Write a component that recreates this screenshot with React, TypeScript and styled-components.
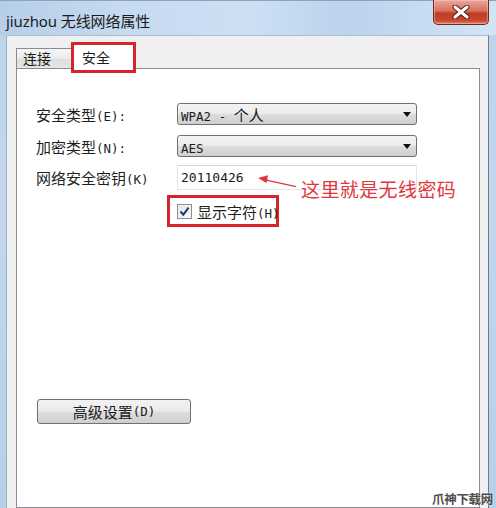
import React from "react";
import styled, { createGlobalStyle } from "styled-components";

const GlobalStyle = createGlobalStyle`
  html, body { margin: 0; padding: 0; background: #fff; }
  body { width: 496px; height: 508px; overflow: hidden; }
  * { box-sizing: border-box; }
`;

const CJK = `"Noto Sans CJK SC", "Noto Sans", sans-serif`;
const MONO = `"DejaVu Sans Mono", "Noto Sans CJK SC", monospace`;

const Window = styled.div`
  position: relative;
  width: 496px;
  height: 508px;
  overflow: hidden;
  display: flex;
  flex-direction: column;
  background: linear-gradient(to bottom, #bcd3ec 0%, #c2d7ee 40%, #b7cfe9 100%);
  font-family: ${CJK};
  color: #1c1c1c;
`;

const TitleBar = styled.div`
  height: 35px;
  flex: none;
  display: flex;
  align-items: flex-start;
  padding-left: 6px;
  background: linear-gradient(
    to right,
    #b6cee9 0%,
    #c6daf0 25%,
    #cddff3 50%,
    #bcd3ed 70%,
    #d3e4f5 100%
  );
  border-top: 1px solid #8da3bd;
`;

const Title = styled.div`
  margin-top: 10px;
  font-family: "Noto Sans", "Noto Sans CJK SC", sans-serif;
  font-size: 15px;
  line-height: 20px;
  color: #1a1a1a;
  letter-spacing: -0.1px;
`;

const CloseButton = styled.div`
  margin-left: auto;
  margin-right: 7px;
  margin-top: -1px;
  width: 56px;
  height: 25px;
  border: 1px solid #6b2b22;
  border-top: none;
  border-radius: 0 0 5px 5px;
  background: linear-gradient(
    to bottom,
    #e9a99d 0%,
    #d8705d 45%,
    #c23c24 55%,
    #c8472e 85%,
    #de8270 100%
  );
  box-shadow: inset 0 0 0 1px rgba(255, 210, 200, 0.45);
  display: flex;
  align-items: center;
  justify-content: center;
`;

const Body = styled.div`
  flex: 1;
  min-height: 0;
  margin: 0 7px 0 6px;
  border-left: 1px solid #9fb1c6;
  border-right: 1px solid #6c7c90;
  border-top: 1px solid #a9bcd2;
  background: #f0f0f0;
  padding: 7px 8px 0 9px;
  display: flex;
  flex-direction: column;
`;

const TabStrip = styled.div`
  display: flex;
  align-items: flex-end;
  flex: none;
`;

const Tab = styled.div<{ $active?: boolean }>`
  position: relative;
  font-size: 14px;
  line-height: 18px;
  color: #1a1a1a;
  border: 1px solid #898c95;
  border-bottom: none;
  ${(p) =>
    p.$active
      ? `
    width: 65px;
    height: 26px;
    margin-bottom: -1px;
    background: #ffffff;
    z-index: 2;
    padding: 4px 0 0 10px;
    &::after {
      content: "";
      position: absolute;
      left: -1px;
      right: -1px;
      top: -2px;
      bottom: -4px;
      border: 3px solid #d5242b;
    }
  `
      : `
    width: 55px;
    height: 20px;
    background: linear-gradient(to bottom, #f6f6f6 0%, #ebebeb 50%, #dedede 51%, #e6e6e6 100%);
    border-right: none;
    padding: 0 0 0 6px;
  `}
`;

const Panel = styled.div`
  flex: 1;
  background: #ffffff;
  border: 1px solid #898c95;
  padding: 34px 0 0 19px;
  display: flex;
  flex-direction: column;
`;

const Row = styled.div<{ $top: number }>`
  display: flex;
  align-items: center;
  margin-top: ${(p) => p.$top}px;
`;

const Label = styled.div`
  width: 141px;
  flex: none;
  font-size: 15px;
  color: #1e1e1e;
  white-space: nowrap;
`;

const Han = styled.span`
  font-family: ${CJK};
  font-size: 15px;
`;

const Latin = styled.span`
  font-family: ${MONO};
  font-size: 12.5px;
  white-space: pre;
`;

const Field = styled.div`
  position: relative;
  width: 240px;
`;

const Select = styled.div`
  position: relative;
  width: 240px;
  height: 22px;
  border: 1px solid #707070;
  border-radius: 3px;
  background: linear-gradient(to bottom, #f3f3f3 0%, #ebebeb 48%, #dddddd 52%, #cfcfcf 100%);
  padding-left: 3px;
  line-height: 20px;
  color: #1a1a1a;
  white-space: nowrap;
`;

const Caret = styled.div`
  position: absolute;
  right: 5px;
  top: 8px;
  width: 0;
  height: 0;
  border-left: 4px solid transparent;
  border-right: 4px solid transparent;
  border-top: 5px solid #111;
`;

const TextBox = styled.div`
  width: 240px;
  height: 25px;
  border: 1px solid #e2e5ea;
  border-top-color: #d2d6dc;
  background: #fff;
  padding-left: 3px;
  display: flex;
  align-items: center;
  font-family: ${MONO};
  font-size: 13px;
  color: #1a1a1a;
`;

const Annotation = styled.div`
  position: absolute;
  left: 80px;
  top: 9px;
  display: flex;
  align-items: flex-start;
  pointer-events: none;
`;

const AnnotationText = styled.span`
  margin-left: 4px;
  margin-top: 4px;
  font-family: ${CJK};
  font-size: 19px;
  line-height: 22px;
  letter-spacing: 0.4px;
  color: #e0363c;
  white-space: nowrap;
`;

const CheckFrame = styled.div`
  margin-left: -10px;
  display: flex;
  align-items: center;
  gap: 5px;
  height: 32px;
  border: 3px solid #d5242b;
  padding: 0 1px 0 7px;
  width: 112px;
`;

const CheckBox = styled.div`
  width: 15px;
  height: 15px;
  flex: none;
  border: 1px solid #8e8f8f;
  background: linear-gradient(135deg, #e4e6e8 0%, #f8f8f8 100%);
  box-shadow: inset 0 0 0 1px #f4f4f4;
  display: flex;
  align-items: center;
  justify-content: center;
`;

const CheckText = styled.span`
  white-space: nowrap;
  color: #1e1e1e;
`;

const Button = styled.div`
  margin-top: 172px;
  margin-left: 1px;
  width: 154px;
  height: 25px;
  border: 1px solid #707070;
  border-radius: 3px;
  background: linear-gradient(to bottom, #f2f2f2 0%, #ebebeb 48%, #dddddd 52%, #cfcfcf 100%);
  display: flex;
  align-items: center;
  justify-content: center;
  color: #1a1a1a;
  white-space: nowrap;
`;

const Watermark = styled.div`
  position: absolute;
  right: 3px;
  bottom: 1px;
  font-family: ${CJK};
  font-weight: 700;
  font-size: 12.5px;
  line-height: 16px;
  letter-spacing: -0.3px;
  color: #4d4d4d;
  text-shadow: 0 0 2px #fff;
`;

export default function App() {
  return (
    <>
      <GlobalStyle />
      <Window>
        <TitleBar>
          <Title>jiuzhou 无线网络属性</Title>
          <CloseButton>
            <svg width="18" height="14" viewBox="0 0 18 14">
              <path d="M3 2 L15 12 M15 2 L3 12" stroke="#5a1a12" strokeWidth="5" strokeLinecap="round" />
              <path d="M3 2 L15 12 M15 2 L3 12" stroke="#ffffff" strokeWidth="3" strokeLinecap="round" />
            </svg>
          </CloseButton>
        </TitleBar>
        <Body>
          <TabStrip>
            <Tab>连接</Tab>
            <Tab $active>安全</Tab>
          </TabStrip>
          <Panel>
            <Row $top={0}>
              <Label>
                <Han>安全类型</Han>
                <Latin>(E):</Latin>
              </Label>
              <Select>
                <Latin>{"WPA2 - "}</Latin>
                <Han>个人</Han>
                <Caret />
              </Select>
            </Row>
            <Row $top={10}>
              <Label>
                <Han>加密类型</Han>
                <Latin>(N):</Latin>
              </Label>
              <Select>
                <Latin>AES</Latin>
                <Caret />
              </Select>
            </Row>
            <Row $top={8}>
              <Label>
                <Han>网络安全密钥</Han>
                <Latin>(K)</Latin>
              </Label>
              <Field>
                <TextBox>20110426</TextBox>
                <Annotation>
                  <svg width="40" height="15" viewBox="0 0 40 15">
                    <path d="M7 5.6 L39 12.6" stroke="#e0363c" strokeWidth="1.4" fill="none" />
                    <path d="M1 4 L11 1.2 L9.6 9 Z" fill="#e0363c" />
                  </svg>
                  <AnnotationText>这里就是无线密码</AnnotationText>
                </Annotation>
              </Field>
            </Row>
            <Row $top={5}>
              <Label />
              <CheckFrame>
                <CheckBox>
                  <svg width="11" height="11" viewBox="0 0 11 11">
                    <path d="M1.5 5.5 L4.3 8.6 L9.6 1.6" stroke="#1e3a6e" strokeWidth="2" fill="none" />
                  </svg>
                </CheckBox>
                <CheckText>
                  <Han>显示字符</Han>
                  <Latin>(H)</Latin>
                </CheckText>
              </CheckFrame>
            </Row>
            <Button>
              <Han>高级设置</Han>
              <Latin>(D)</Latin>
            </Button>
          </Panel>
        </Body>
        <Watermark>爪神下载网</Watermark>
      </Window>
    </>
  );
}
